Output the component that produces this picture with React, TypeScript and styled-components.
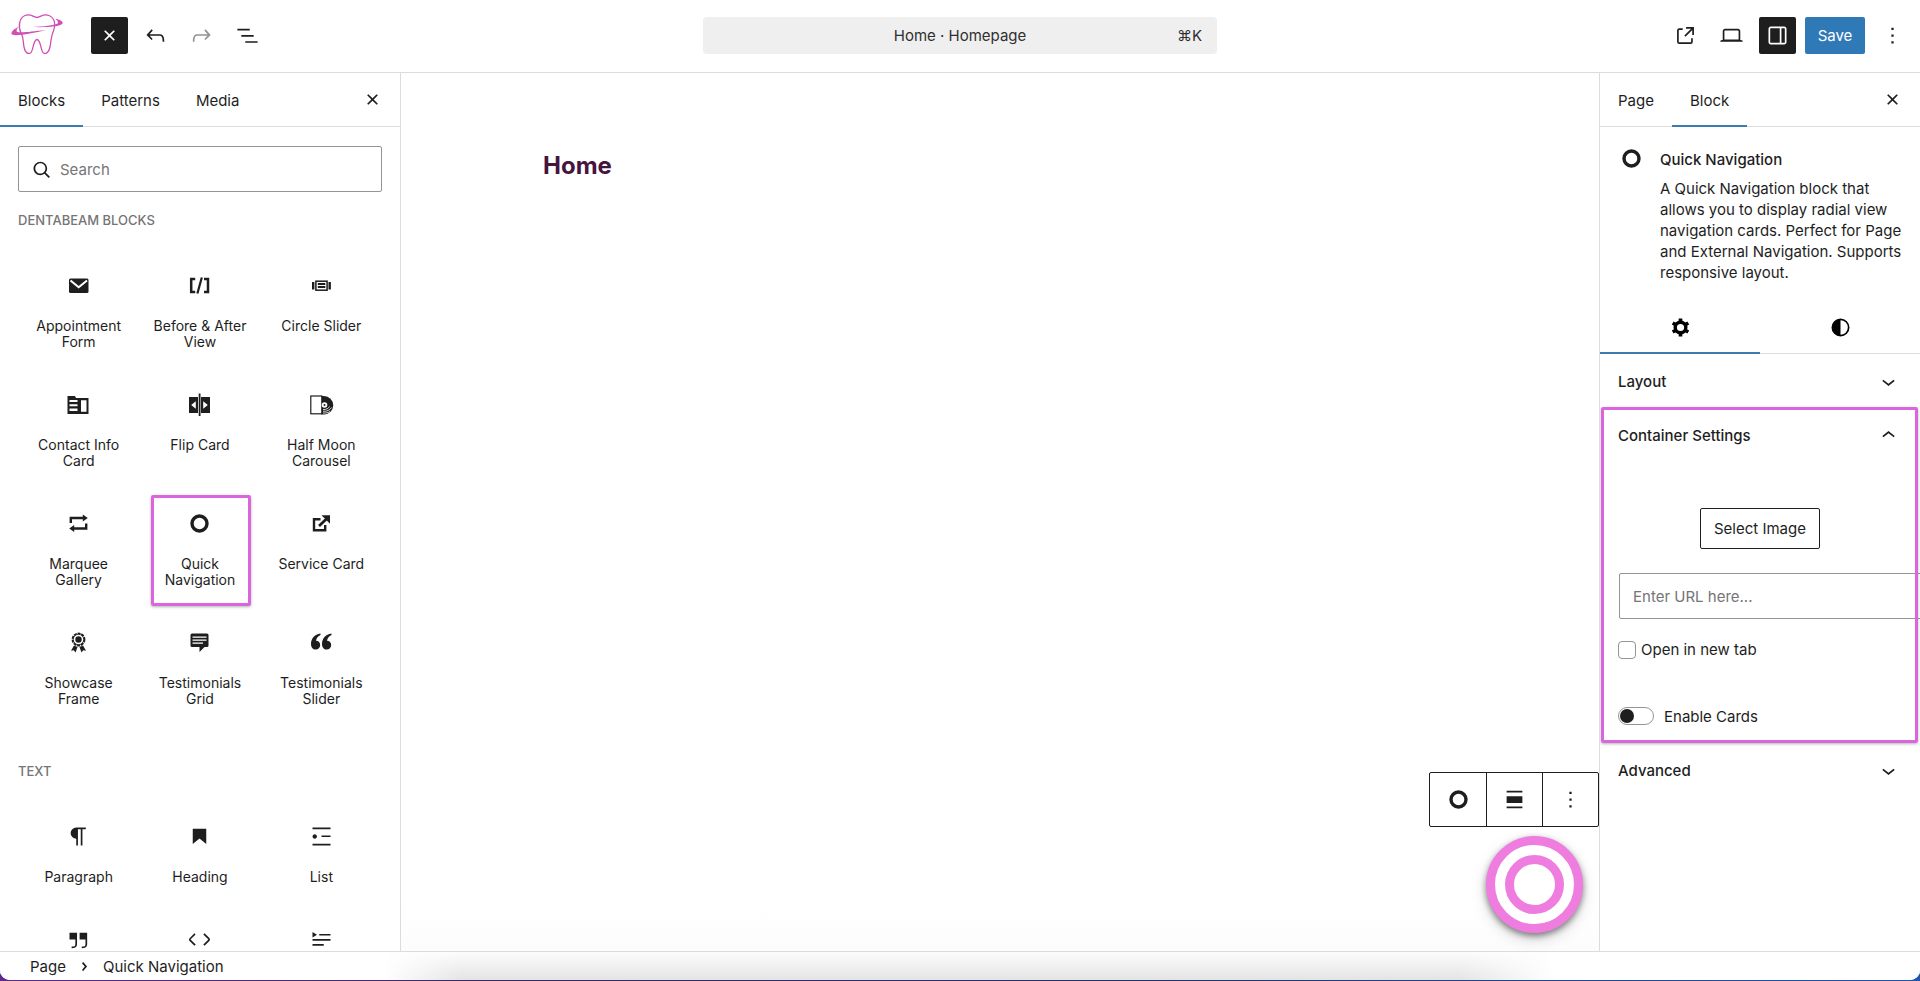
import React, { useState } from "react";
import styled, { createGlobalStyle, css } from "styled-components";

const ink = "#1e1e1e";
const line = "#dcdcdc";
const accent = "#3a7cb0";
const highlight = "#d966dd";

const GlobalStyle = createGlobalStyle`
  *, *::before, *::after { box-sizing: border-box; }
  body {
    margin: 0;
    background: linear-gradient(90deg, #5b2a8c 0%, #3a2a66 25%, #24336f 60%, #1f55b0 100%);
    color: ${ink};
    font-family: Inter, "Noto Sans", "DejaVu Sans", sans-serif;
    font-size: 15px;
    line-height: 21px;
  }
  button, input { font: inherit; color: inherit; }
  button { cursor: pointer; }
  svg { flex: none; }
  h1, h2, h3, p, ul { margin: 0; padding: 0; }
`;

/* ---------- shell ---------- */

const Frame = styled.div`
  height: calc(100vh - 1px);
  display: flex;
  flex-direction: column;
  background: #fff;
  border-radius: 0 0 10px 10px;
  overflow: hidden;
`;

const Header = styled.header`
  flex: none;
  display: grid;
  grid-template-columns: 1fr minmax(200px, 514px) 1fr;
  align-items: center;
  height: 73px;
  padding-bottom: 2px;
  border-bottom: 1px solid ${line};
`;

const HeaderGroup = styled.div<{ $end?: boolean }>`
  display: flex;
  align-items: center;
  gap: 9px;
  ${(p) => p.$end && css`justify-content: flex-end; padding-right: 9px;`}
`;

const Logo = styled.a`
  display: flex;
  width: 82px;
  padding-left: 10px;
`;

const IconButton = styled.button<{ $solid?: boolean; $dim?: boolean }>`
  display: flex;
  align-items: center;
  justify-content: center;
  width: 37px;
  height: 37px;
  padding: 0;
  border: 0;
  border-radius: 2px;
  background: ${(p) => (p.$solid ? ink : "transparent")};
  color: ${(p) => (p.$solid ? "#fff" : p.$dim ? "#949494" : ink)};
`;

const CommandBar = styled.button`
  display: grid;
  grid-template-columns: 1fr auto 1fr;
  align-items: center;
  height: 37px;
  padding: 0 15px;
  border: 0;
  border-radius: 4px;
  background: #efefef;
`;

const CommandTitle = styled.span`
  grid-column: 2;
  color: #2f2f2f;
`;

const Shortcut = styled.kbd`
  justify-self: end;
  font: inherit;
  color: #2f2f2f;
`;

const SaveButton = styled.button`
  height: 37px;
  width: 60px;
  padding: 0;
  border: 0;
  border-radius: 2px;
  background: #3079b7;
  color: #fff;
`;

const Body = styled.div`
  flex: 1;
  min-height: 0;
  display: flex;
`;

/* ---------- tabs ---------- */

const TabBar = styled.div`
  flex: none;
  display: flex;
  align-items: stretch;
  height: 54px;
  padding-right: 9px;
  border-bottom: 1px solid ${line};
`;

const Tab = styled.button<{ $active?: boolean }>`
  margin-bottom: -1px;
  padding: 0 18px;
  border: 0;
  background: none;
  box-shadow: ${(p) => (p.$active ? `inset 0 -2px 0 ${accent}` : "none")};
`;

const TabClose = styled(IconButton)`
  margin: auto 0 auto auto;
`;

/* ---------- block inserter ---------- */

const Inserter = styled.aside`
  flex: none;
  width: 401px;
  display: flex;
  flex-direction: column;
  border-right: 1px solid ${line};
  overflow: hidden;
`;

const SearchBox = styled.label`
  flex: none;
  display: flex;
  align-items: center;
  gap: 5px;
  height: 46px;
  margin: 19px 18px 0;
  padding-left: 9px;
  border: 1px solid #949494;
  border-radius: 2px;
`;

const SearchInput = styled.input`
  flex: 1;
  min-width: 0;
  padding: 0;
  border: 0;
  outline: 0;
  background: none;
  &::placeholder { color: #757575; opacity: 1; }
`;

const GroupTitle = styled.h2`
  padding: 20px 18px 0;
  color: #757575;
  font-size: 13px;
  line-height: 16px;
  font-weight: 500;
  text-transform: uppercase;
`;

const BlockGrid = styled.ul`
  display: grid;
  grid-template-columns: repeat(3, 1fr);
  padding: 21px 18px 18px;
  list-style: none;
`;

const BlockButton = styled.button<{ $marked?: boolean }>`
  position: relative;
  display: flex;
  flex-direction: column;
  align-items: center;
  width: 100%;
  height: 100%;
  padding: 9px;
  border: 0;
  background: none;
  font-size: 14px;
  line-height: 16px;
  ${(p) =>
    p.$marked &&
    css`
      &::after {
        content: "";
        position: absolute;
        inset: 8px 10px 0 12px;
        border: 3px solid ${highlight};
        border-radius: 2px;
        box-shadow: 0 1px 3px rgba(0, 0, 0, 0.3);
      }
    `}
`;

const BlockIcon = styled.span`
  display: flex;
  padding: 14px 0;
`;

const BlockLabel = styled.span`
  padding: 5px 2px 9px;
`;

/* ---------- canvas ---------- */

const Canvas = styled.main`
  flex: 1;
  min-width: 0;
  display: flex;
  flex-direction: column;
  background: linear-gradient(#fff 95%, #fcfcfc);
`;

const PageTitle = styled.h1`
  padding: 76px 0 0 142px;
  color: #45143f;
  font-size: 24px;
  line-height: 34px;
  font-weight: 700;
`;

const Floating = styled.div`
  display: flex;
  flex-direction: column;
  align-items: flex-end;
  gap: 9px;
  margin-top: auto;
  padding-bottom: 18px;
`;

const BlockToolbar = styled.div`
  display: flex;
  height: 55px;
  border: 1px solid ${ink};
  border-radius: 2px;
  background: #fff;
`;

const ToolButton = styled.button`
  display: flex;
  align-items: center;
  justify-content: center;
  width: 56px;
  padding: 0;
  border: 0;
  background: none;
  & + & { border-left: 1px solid ${ink}; }
`;

const RadialTrigger = styled.button`
  display: flex;
  align-items: center;
  justify-content: center;
  width: 97px;
  height: 97px;
  margin-right: 16px;
  padding: 0;
  border: 9px solid #ee7ddf;
  border-radius: 50%;
  background: #fff;
  box-shadow: 0 3px 6px rgba(0, 0, 0, 0.45), 0 6px 16px rgba(0, 0, 0, 0.15);
  &::before {
    content: "";
    width: 59px;
    height: 59px;
    border: 9px solid #ee7ddf;
    border-radius: 50%;
  }
`;

/* ---------- settings sidebar ---------- */

const Sidebar = styled.aside`
  flex: none;
  width: 321px;
  border-left: 1px solid ${line};
  overflow: hidden;
`;

const BlockCard = styled.div`
  display: flex;
  gap: 15px;
  padding: 18px 18px 17px;
`;

const CardText = styled.div`
  display: flex;
  flex-direction: column;
  gap: 8px;
  padding-top: 4px;
`;

const CardTitle = styled.h2`
  font-size: 15px;
  line-height: 21px;
  font-weight: 500;
`;

const ModeTabs = styled.div`
  display: flex;
  height: 54px;
  border-bottom: 1px solid ${line};
`;

const ModeTab = styled(Tab)`
  flex: 1;
  display: flex;
  align-items: center;
  justify-content: center;
  color: #000;
`;

const Panel = styled.section<{ $marked?: boolean }>`
  position: relative;
  ${(p) =>
    p.$marked &&
    css`
      &::after {
        content: "";
        position: absolute;
        inset: -1px 2px 0 1px;
        border: 3px solid ${highlight};
        border-radius: 2px;
        box-shadow: 0 1px 3px rgba(0, 0, 0, 0.3);
        pointer-events: none;
      }
    `}
`;

const PanelToggle = styled.button`
  display: flex;
  align-items: center;
  justify-content: space-between;
  width: 100%;
  height: 54px;
  padding: 0 18px;
  border: 0;
  background: none;
  font-weight: 500;
`;

const PanelBody = styled.div`
  display: flex;
  flex-direction: column;
  padding: 46px 18px 18px;
`;

const SelectImage = styled.button`
  align-self: center;
  width: 120px;
  height: 41px;
  padding: 0;
  border: 1px solid ${ink};
  border-radius: 2px;
  background: #fff;
`;

const UrlInput = styled.input`
  width: 343px;
  height: 46px;
  margin: 24px 0 21px 1px;
  padding: 0 13px;
  border: 1px solid #949494;
  border-radius: 2px;
  background: #fff;
  &::placeholder { color: #757575; opacity: 1; }
`;

const CheckLabel = styled.label`
  display: flex;
  align-items: center;
  gap: 5px;
  height: 19px;
`;

const Checkbox = styled.input`
  appearance: none;
  width: 18px;
  height: 18px;
  margin: 0;
  border: 1px solid #949494;
  border-radius: 4px;
  background: #fff;
  &:checked { background: ${accent}; }
`;

const SwitchLabel = styled.label`
  display: flex;
  align-items: center;
  gap: 10px;
  height: 18px;
  margin-top: 48px;
`;

const Switch = styled.input`
  appearance: none;
  display: flex;
  align-items: center;
  width: 36px;
  height: 18px;
  margin: 0;
  padding: 0 1px;
  border: 1px solid #949494;
  border-radius: 9px;
  background: #fff;
  &::before {
    content: "";
    width: 14px;
    height: 14px;
    border-radius: 50%;
    background: ${ink};
  }
  &:checked { justify-content: flex-end; }
`;

/* ---------- footer ---------- */

const Footer = styled.footer`
  flex: none;
  height: 29px;
  border-top: 1px solid ${line};
  background:
    linear-gradient(90deg, #fff 20%, transparent 24%, transparent 76%, #fff 81%),
    linear-gradient(#fcfcfc, #e4e4e4);
`;

const Crumbs = styled.nav`
  display: flex;
  align-items: center;
  gap: 5px;
  height: 28px;
  padding-left: 30px;
`;

const Crumb = styled.a`
  color: inherit;
  text-decoration: none;
`;

/* ---------- icons ---------- */

const Svg = ({ d, size = 27, flip }: { d: string; size?: number; flip?: boolean }) => (
  <svg width={size} height={size} viewBox="0 0 24 24" fill="currentColor" fillRule="evenodd" aria-hidden="true">
    <path d={d} transform={flip ? "translate(24 0) scale(-1 1)" : undefined} />
  </svg>
);

const Draw = ({ children }: { children: React.ReactNode }) => (
  <svg width="27" height="27" viewBox="0 0 27 27" fill="currentColor" aria-hidden="true">
    {children}
  </svg>
);

const paths = {
  close:
    "M12 13.06l3.712 3.713 1.061-1.06L13.061 12l3.712-3.712-1.06-1.06L12 10.938 8.288 7.227l-1.061 1.06L10.939 12l-3.712 3.712 1.06 1.061L12 13.061z",
  undo:
    "M18.3 11.7c-.6-.6-1.4-.9-2.3-.9H6.7l2.9-3.3-1.1-1-4.5 5L8.5 16l1-1-2.7-2.7H16c.5 0 .9.2 1.3.5 1 1 1 3.4 1 4.5v.3h1.5v-.2c0-1.5 0-4.3-1.5-5.7z",
  redo:
    "M15.6 6.5l-1.1 1 2.9 3.3H8c-.9 0-1.7.3-2.3.9-1.4 1.5-1.4 4.2-1.4 5.6v.2h1.5v-.3c0-1.1 0-3.5 1-4.5.3-.3.7-.5 1.3-.5h9.2L14.5 15l1.1 1.1 4.6-4.6-4.6-5z",
  overview: "M3 6h11v1.5H3V6Zm3.5 5.5h11V13h-11v-1.5ZM21 17H10v1.5h11V17Z",
  external:
    "M19.5 4.5h-7V6h4.44l-5.97 5.97 1.06 1.06L18 7.06v4.44h1.5v-7Zm-13 1a2 2 0 0 0-2 2v10a2 2 0 0 0 2 2h10a2 2 0 0 0 2-2v-3H17v3a.5.5 0 0 1-.5.5h-10a.5.5 0 0 1-.5-.5v-10a.5.5 0 0 1 .5-.5h3V5.5h-3Z",
  laptop:
    "M20.5 16h-.7V8c0-1.1-.9-2-2-2H6.2c-1.1 0-2 .9-2 2v8h-.7c-.8 0-1.5.7-1.5 1.5h20c0-.8-.7-1.5-1.5-1.5zM5.7 8c0-.3.2-.5.5-.5h11.6c.3 0 .5.2.5.5v7.6H5.7V8z",
  drawer:
    "M18 4H6c-1.1 0-2 .9-2 2v12c0 1.1.9 2 2 2h12c1.1 0 2-.9 2-2V6c0-1.1-.9-2-2-2zm-4 14.5H6c-.3 0-.5-.2-.5-.5V6c0-.3.2-.5.5-.5h8v13zm4.5-.5c0 .3-.2.5-.5.5h-2.5v-13H18c.3 0 .5.2.5.5v12z",
  more: "M13 19h-2v-2h2v2zm0-6h-2v-2h2v2zm0-6h-2V5h2v2z",
  search:
    "M13 5c-3.3 0-6 2.7-6 6 0 1.4.5 2.7 1.3 3.7l-3.8 3.8 1.1 1.1 3.8-3.8c1 .8 2.3 1.3 3.7 1.3 3.3 0 6-2.7 6-6S16.3 5 13 5zm0 10.5c-2.5 0-4.5-2-4.5-4.5s2-4.5 4.5-4.5 4.5 2 4.5 4.5-2 4.5-4.5 4.5z",
  paragraph:
    "M9.996 14v-.225h.004V20h1.5V5.5H14V20h1.5V5.5h3V4H9.996a5 5 0 0 0 0 10z",
  heading: "M6 5v13.6l6-4.75 6 4.75V5H6Z",
  list:
    "M4 4v1.5h16V4H4zm8 8.5h8V11h-8v1.5zM4 20h16v-1.5H4V20zm4-8c0-1.1-.9-2-2-2s-2 .9-2 2 .9 2 2 2 2-.9 2-2z",
  quote:
    "M13 6v6h5.2v4c0 .8-.2 1.4-.5 1.7-.6.6-1.6.6-2.5.5h-.3v1.5h.5c1 0 2.3-.1 3.3-1 .6-.6 1-1.6 1-2.8V6H13zm-9 6h5.2v4c0 .8-.2 1.4-.5 1.7-.6.6-1.6.6-2.5.5h-.3v1.5h.5c1 0 2.3-.1 3.3-1 .6-.6 1-1.6 1-2.8V6H4v6z",
  code:
    "M20.8 10.7l-4.3-4.3-1.1 1.1 4.3 4.3c.1.1.1.3 0 .4l-4.3 4.3 1.1 1.1 4.3-4.3c.7-.8.7-1.9 0-2.6zM4.2 11.8l4.3-4.3-1-1-4.3 4.3c-.7.7-.7 1.8 0 2.5l4.3 4.3 1.1-1.1-4.3-4.3c-.2-.1-.2-.3-.1-.4z",
  details: "M4 16h10v1.5H4V16Zm0-4.5h16V13H4v-1.5ZM10 7h10v1.5H10V7ZM4 5.25l4 2.5-4 2.5v-5Z",
  down: "M17.5 11.6L12 16l-5.5-4.4.9-1.2L12 14l4.5-3.6 1 1.2z",
  up: "M6.5 12.4L12 8l5.5 4.4-.9 1.2L12 10l-4.5 3.6-1-1.2z",
  contrast: "M20 12a8 8 0 1 1-16 0 8 8 0 0 1 16 0Zm-1.5 0a6.5 6.5 0 0 1-6.5 6.5v-13a6.5 6.5 0 0 1 6.5 6.5Z",
  crumb: "M10.86 8.04l3.42 3.99-3.42 3.99-1.14-.98 2.58-3.01-2.58-3.01z",
  align: "M5 15h14V9H5v6zm0 4.8h14v-1.5H5v1.5zM5 4.2v1.5h14V4.2H5z",
};

const ToothLogo = () => (
  <svg width="54" height="44" viewBox="0 0 54 44" fill="none" stroke="#d04fb4" aria-hidden="true">
    <path
      strokeWidth="1.3"
      strokeLinejoin="round"
      d="M11 20C8 14 9 5 15 2.500C20 .5 23 3.500 27 4.500C31 3.500 34 .5 39 2.500C45 5 46 12 43.500 18C41 23 41 29 40 34C39 39 36 41.500 33.500 40C30.500 38 31 26.500 27 26.500C23 26.500 23.500 38 20.500 40C17.500 41.500 15 39 14 34C13 29 13.500 24 11 20Z"
    />
    <path
      fill="#d04fb4"
      stroke="none"
      d="M9 13.500C4 16 1 18.500 1.500 21C3 24 22 20.500 36 17C22 18.500 12 20 7.500 19C5.500 18 7 15.500 9 13.500Z"
    />
    <path
      fill="#d04fb4"
      stroke="none"
      d="M45 5.500C50 6.500 53.500 8.500 52.500 10.500C50 14 34 14.500 22 14C34 13.500 44 12.500 47.500 10.500C49 9 47 7 45 5.500Z"
    />
  </svg>
);

const Ring = () => (
  <Draw>
    <circle cx="13.5" cy="13.5" r="7.500" fill="none" stroke="currentColor" strokeWidth="3.400" />
  </Draw>
);

const Gear = () => (
  <Draw>
    <g fill="none" stroke="currentColor">
      <circle cx="13.500" cy="13.500" r="5.300" strokeWidth="3.400" />
      <path
        strokeWidth="3.600"
        d="M13.500 4.500V8M13.500 19V22.500M5.700 9L8.800 10.800M18.200 16.200L21.300 18M5.700 18L8.800 16.200M18.200 10.800L21.300 9"
      />
    </g>
  </Draw>
);

const Mail = () => (
  <Draw>
    <rect x="4" y="6.500" width="19.500" height="14.500" rx="1.500" />
    <path d="M5.500 8.500L13.700 15.300L22 8.500" fill="none" stroke="#fff" strokeWidth="2" />
  </Draw>
);

const BeforeAfter = () => (
  <Draw>
    <g fill="none" stroke="currentColor">
      <path strokeWidth="2.500" d="M9.200 7H5.200V20H9.200M18 7H22V20H18" />
      <path strokeWidth="2.200" d="M15.800 5.500L11.400 21.500" />
    </g>
  </Draw>
);

const CircleSlider = () => (
  <Draw>
    <rect x="4" y="10" width="2.400" height="7.500" />
    <rect x="20.500" y="10" width="2.400" height="7.500" />
    <rect x="7.900" y="9.200" width="11.200" height="9" fill="none" stroke="currentColor" strokeWidth="1.500" />
    <path d="M9.800 12H17.300M9.800 15H17.300" stroke="currentColor" strokeWidth="1.800" />
  </Draw>
);

const ContactInfo = () => (
  <Draw>
    <path d="M2.500 5H10L11 7H23.500V23H2.500Z" />
    <path fill="#fff" d="M4.500 9H12.500V11H4.500ZM4.500 13.200H12.500V15.200H4.500ZM4.500 17.400H12.500V20H4.500ZM16 9.200H21.500V20.800H16Z" />
  </Draw>
);

const FlipCard = () => (
  <Draw>
    <path d="M3 6H12V22H3ZM15 6H24V22H15ZM12.700 2.500H14.500V25H12.700Z" />
    <path fill="#fff" d="M9.800 10.200V17.800L5.200 14ZM17.200 10.200V17.800L21.800 14Z" />
  </Draw>
);

const HalfMoon = () => (
  <Draw>
    <path d="M13.500 5H16A9.200 9.200 0 0 1 16 23.400H13.500Z" />
    <rect x="2.800" y="5" width="11" height="17.800" fill="#fff" stroke="currentColor" strokeWidth="1.200" />
    <circle cx="16.500" cy="14" r="2.800" fill="#fff" />
    <circle cx="16.500" cy="14" r="1" />
    <path
      d="M15 18.500C18 18.800 20.500 17.500 21.500 15.500M15 20.300C19 20.600 22 19 23.500 16.500M15 22C18 22.200 20 21.800 22 20.500"
      fill="none"
      stroke="#fff"
      strokeWidth=".8"
    />
  </Draw>
);

const Marquee = () => (
  <Draw>
    <path fill="none" stroke="currentColor" strokeWidth="2.400" d="M5.800 13V8H18.500M21.200 13.500V18.500H8.500" />
    <path d="M17.800 4.500L22.800 8L17.800 11.500ZM9.200 15L4.200 18.500L9.200 22Z" />
  </Draw>
);

const ServiceCard = () => (
  <Draw>
    <path fill="none" stroke="currentColor" strokeWidth="2.400" d="M12.500 9.200H6V20.200H17.200V15" />
    <path fill="none" stroke="currentColor" strokeWidth="2.800" d="M11 16L20 7.500" />
    <path d="M13.500 5.200H22V13.700Z" />
  </Draw>
);

const Award = () => (
  <Draw>
    <circle cx="13.500" cy="10.500" r="6" fill="none" stroke="currentColor" strokeWidth="1.800" strokeDasharray="3 .8" />
    <circle cx="13.500" cy="10.500" r="5.200" fill="none" stroke="currentColor" strokeWidth=".8" />
    <circle cx="13.500" cy="10.500" r="3.200" />
    <path d="M9 16.500L12.500 18L10.500 23.500L8.800 21.300L6 21.800ZM18 16.500L14.500 18L16.500 23.500L18.200 21.300L21 21.800Z" />
  </Draw>
);

const Testimonials = () => (
  <Draw>
    <path d="M6 4.500H21A1.500 1.500 0 0 1 22.500 6V16.500A1.500 1.500 0 0 1 21 18H18.500L13.500 23V18H6A1.500 1.500 0 0 1 4.500 16.500V6A1.500 1.500 0 0 1 6 4.500Z" />
    <path d="M6.500 8.200H20.500M6.500 11.200H20.500M6.500 14.200H17" stroke="#fff" strokeWidth="1.200" />
  </Draw>
);

const QuoteMarks = () => (
  <Draw>
    <path d="M12.500 4.500C6.500 5.500 3 9.500 3 15C3 18.500 5 20.500 7.700 20.500C10.300 20.500 12.200 18.600 12.200 16C12.200 13.500 10.500 11.800 8 11.700C8.500 9 10 7 12.500 6Z" />
    <path d="M23.500 4.500C17.500 5.500 14 9.500 14 15C14 18.500 16 20.500 18.700 20.500C21.300 20.500 23.200 18.600 23.200 16C23.200 13.500 21.500 11.800 19 11.700C19.500 9 21 7 23.500 6Z" />
  </Draw>
);

/* ---------- data ---------- */

type Block = { name: string; icon: React.ReactNode; marked?: boolean; iconOnly?: boolean };

const groups: { title: string; blocks: Block[] }[] = [
  {
    title: "Dentabeam Blocks",
    blocks: [
      { name: "Appointment Form", icon: <Mail /> },
      { name: "Before & After View", icon: <BeforeAfter /> },
      { name: "Circle Slider", icon: <CircleSlider /> },
      { name: "Contact Info Card", icon: <ContactInfo /> },
      { name: "Flip Card", icon: <FlipCard /> },
      { name: "Half Moon Carousel", icon: <HalfMoon /> },
      { name: "Marquee Gallery", icon: <Marquee /> },
      { name: "Quick Navigation", icon: <Ring />, marked: true },
      { name: "Service Card", icon: <ServiceCard /> },
      { name: "Showcase Frame", icon: <Award /> },
      { name: "Testimonials Grid", icon: <Testimonials /> },
      { name: "Testimonials Slider", icon: <QuoteMarks /> },
    ],
  },
  {
    title: "Text",
    blocks: [
      { name: "Paragraph", icon: <Svg d={paths.paragraph} /> },
      { name: "Heading", icon: <Svg d={paths.heading} /> },
      { name: "List", icon: <Svg d={paths.list} /> },
      { name: "Quote", icon: <Svg d={paths.quote} />, iconOnly: true },
      { name: "Code", icon: <Svg d={paths.code} />, iconOnly: true },
      { name: "Details", icon: <Svg d={paths.details} />, iconOnly: true },
    ],
  },
];

export default function App() {
  const [newTab, setNewTab] = useState(false);
  const [cards, setCards] = useState(false);

  return (
    <>
      <GlobalStyle />
      <Frame>
        <Header>
          <HeaderGroup>
            <Logo href="#" aria-label="Dashboard">
              <ToothLogo />
            </Logo>
            <IconButton $solid aria-label="Close block inserter"><Svg d={paths.close} /></IconButton>
            <IconButton aria-label="Undo"><Svg d={paths.undo} /></IconButton>
            <IconButton $dim aria-label="Redo"><Svg d={paths.redo} /></IconButton>
            <IconButton aria-label="Document overview"><Svg d={paths.overview} /></IconButton>
          </HeaderGroup>
          <CommandBar>
            <CommandTitle>Home · Homepage</CommandTitle>
            <Shortcut>⌘K</Shortcut>
          </CommandBar>
          <HeaderGroup $end>
            <IconButton aria-label="View page"><Svg d={paths.external} /></IconButton>
            <IconButton aria-label="Preview"><Svg d={paths.laptop} /></IconButton>
            <IconButton $solid aria-label="Settings"><Svg d={paths.drawer} /></IconButton>
            <SaveButton>Save</SaveButton>
            <IconButton aria-label="Options"><Svg d={paths.more} /></IconButton>
          </HeaderGroup>
        </Header>

        <Body>
          <Inserter>
            <TabBar role="tablist">
              <Tab role="tab" $active>Blocks</Tab>
              <Tab role="tab">Patterns</Tab>
              <Tab role="tab">Media</Tab>
              <TabClose aria-label="Close"><Svg d={paths.close} /></TabClose>
            </TabBar>
            <SearchBox>
              <Svg d={paths.search} flip />
              <SearchInput type="text" placeholder="Search" aria-label="Search" />
            </SearchBox>
            {groups.map((g) => (
              <section key={g.title}>
                <GroupTitle>{g.title}</GroupTitle>
                <BlockGrid>
                  {g.blocks.map((b) => (
                    <li key={b.name}>
                      <BlockButton $marked={b.marked} aria-label={b.name}>
                        <BlockIcon>{b.icon}</BlockIcon>
                        {!b.iconOnly && <BlockLabel>{b.name}</BlockLabel>}
                      </BlockButton>
                    </li>
                  ))}
                </BlockGrid>
              </section>
            ))}
          </Inserter>

          <Canvas>
            <PageTitle>Home</PageTitle>
            <Floating>
              <BlockToolbar role="toolbar" aria-label="Block tools">
                <ToolButton aria-label="Quick Navigation"><Ring /></ToolButton>
                <ToolButton aria-label="Align"><Svg d={paths.align} /></ToolButton>
                <ToolButton aria-label="Options"><Svg d={paths.more} /></ToolButton>
              </BlockToolbar>
              <RadialTrigger aria-label="Open navigation" />
            </Floating>
          </Canvas>

          <Sidebar>
            <TabBar role="tablist">
              <Tab role="tab">Page</Tab>
              <Tab role="tab" $active>Block</Tab>
              <TabClose aria-label="Close settings"><Svg d={paths.close} /></TabClose>
            </TabBar>
            <BlockCard>
              <Ring />
              <CardText>
                <CardTitle>Quick Navigation</CardTitle>
                <p>
                  A Quick Navigation block that allows you to display radial view navigation cards. Perfect for Page and
                  External Navigation. Supports responsive layout.
                </p>
              </CardText>
            </BlockCard>
            <ModeTabs role="tablist">
              <ModeTab role="tab" $active aria-label="Settings"><Gear /></ModeTab>
              <ModeTab role="tab" aria-label="Styles"><Svg d={paths.contrast} /></ModeTab>
            </ModeTabs>
            <Panel>
              <PanelToggle aria-expanded="false">Layout<Svg d={paths.down} /></PanelToggle>
            </Panel>
            <Panel $marked>
              <PanelToggle aria-expanded="true">Container Settings<Svg d={paths.up} /></PanelToggle>
              <PanelBody>
                <SelectImage>Select Image</SelectImage>
                <UrlInput type="url" placeholder="Enter URL here..." aria-label="URL" />
                <CheckLabel>
                  <Checkbox type="checkbox" checked={newTab} onChange={(e) => setNewTab(e.target.checked)} />
                  Open in new tab
                </CheckLabel>
                <SwitchLabel>
                  <Switch type="checkbox" role="switch" checked={cards} onChange={(e) => setCards(e.target.checked)} />
                  Enable Cards
                </SwitchLabel>
              </PanelBody>
            </Panel>
            <Panel>
              <PanelToggle aria-expanded="false">Advanced<Svg d={paths.down} /></PanelToggle>
            </Panel>
          </Sidebar>
        </Body>

        <Footer>
          <Crumbs aria-label="Block breadcrumb">
            <Crumb href="#">Page</Crumb>
            <Svg d={paths.crumb} />
            <Crumb href="#">Quick Navigation</Crumb>
          </Crumbs>
        </Footer>
      </Frame>
    </>
  );
}
